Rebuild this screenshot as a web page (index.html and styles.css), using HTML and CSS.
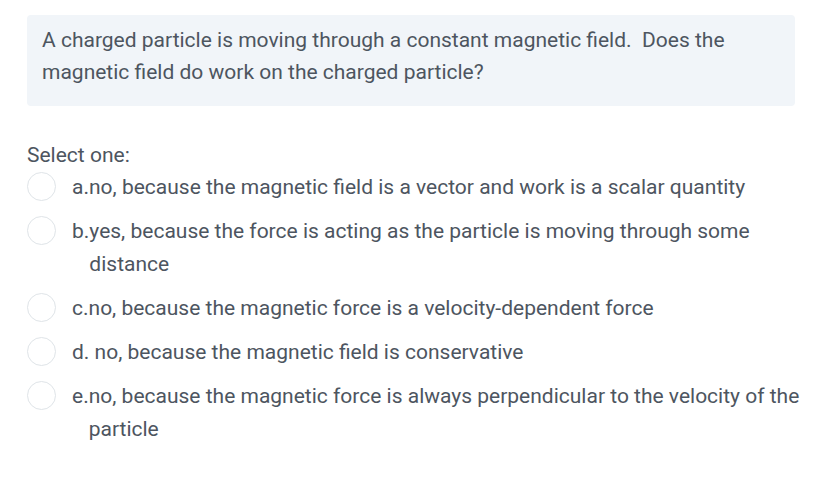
FILE: index.html
```html
<!DOCTYPE html>
<html>
<head>
<meta charset="utf-8">
<link rel="stylesheet" href="styles.css">
</head>
<body>
<div class="que">
  <div class="qtext">A charged particle is moving through a constant magnetic field.&nbsp; Does the magnetic field do work on the charged particle?</div>
  <div class="ablock">
    <div class="prompt">Select one:</div>
    <div class="answer">
      <div class="opt"><span class="radio"></span><span class="num">a.</span><div class="txt">no, because the magnetic field is a vector and work is a scalar quantity</div></div>
      <div class="opt"><span class="radio"></span><span class="num">b.</span><div class="txt">yes, because the force is acting as the particle is moving through some distance</div></div>
      <div class="opt"><span class="radio"></span><span class="num">c.</span><div class="txt">no, because the magnetic force is a velocity-dependent force</div></div>
      <div class="opt"><span class="radio"></span><span class="num">d.</span><div class="txt">&nbsp;no, because the magnetic field is conservative</div></div>
      <div class="opt"><span class="radio"></span><span class="num">e.</span><div class="txt">no, because the magnetic force is always perpendicular to the velocity of the particle</div></div>
    </div>
  </div>
</div>
</body>
</html>
```
FILE: styles.css
```css
html, body { margin: 0; padding: 0; background: #fff; }
body {
  font-family: Roboto, "Liberation Sans", sans-serif;
  font-size: 21px;
  color: #4d5560;
}
.que { padding: 15px 8px 0 27px; }
.qtext {
  background: #f1f5f9;
  border-radius: 4px;
  padding: 9px 15px 18px 15px;
  margin-right: 22px;
  line-height: 32px;
}
.ablock { margin-top: 35px; }
.prompt { line-height: 28px; }
.answer { display: flex; flex-direction: column; margin-top: 2px; }
.opt {
  display: flex;
  align-items: flex-start;
  line-height: 33px;
  padding: 0 0 11px 0;
}
.radio {
  flex: none;
  width: 29px;
  height: 29px;
  border: 1px solid #dfe4e8;
  border-radius: 50%;
  margin: 1px 16px 0 0;
  box-sizing: border-box;
  background: #fff;
}
.num { flex: none; }
.txt { flex: 1; }
```
